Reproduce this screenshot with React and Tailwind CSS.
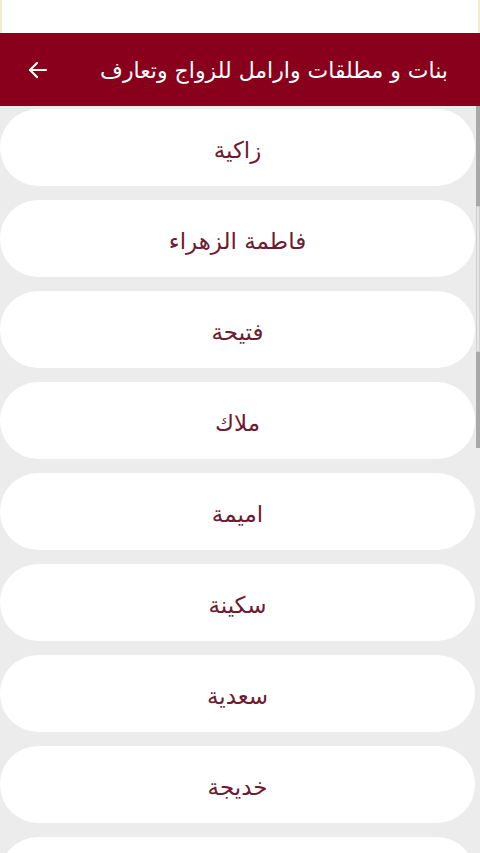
import React from "react";

const names = ["زاكية", "فاطمة الزهراء", "فتيحة", "ملاك", "اميمة", "سكينة", "سعدية", "خديجة", ""];

export default function App() {
  return (
    <div className="relative w-[480px] h-[853px] overflow-hidden bg-[#ececec]" style={{ fontFamily: '"DejaVu Sans", sans-serif' }}>
      <div className="h-[33px] bg-white border-x-2 border-[#f3eccb]"></div>
      <div dir="rtl" className="h-[73px] bg-[#88001b] flex items-center justify-between pr-[32px] pl-[26px]">
        <span className="text-white text-[22px] leading-none pt-[2px]">بنات و مطلقات وارامل للزواج وتعارف</span>
        <svg width="24" height="24" viewBox="0 0 24 24" fill="none" stroke="white" strokeWidth="2.2" strokeLinecap="round" strokeLinejoin="round">
          <path d="M20 12H4" />
          <path d="M11 5l-7 7 7 7" />
        </svg>
      </div>
      <div className="flex flex-col gap-[14px] pt-[3px] pr-[5px]">
        {names.map((n, i) => (
          <div key={i} dir="rtl" className="h-[77px] bg-white rounded-[38px] flex items-center justify-center shrink-0 pt-[6px]">
            <span className="text-[#6e1a31] text-[23px] leading-none">{n}</span>
          </div>
        ))}
      </div>
      <div className="absolute right-0 top-[106px] w-[4px] h-[342px] bg-[#a9a9a9]"></div>
      <div className="absolute right-0 top-[206px] w-[4px] h-[146px] bg-[#e6e6e6] border border-[#cfcfcf]"></div>
    </div>
  );
}
